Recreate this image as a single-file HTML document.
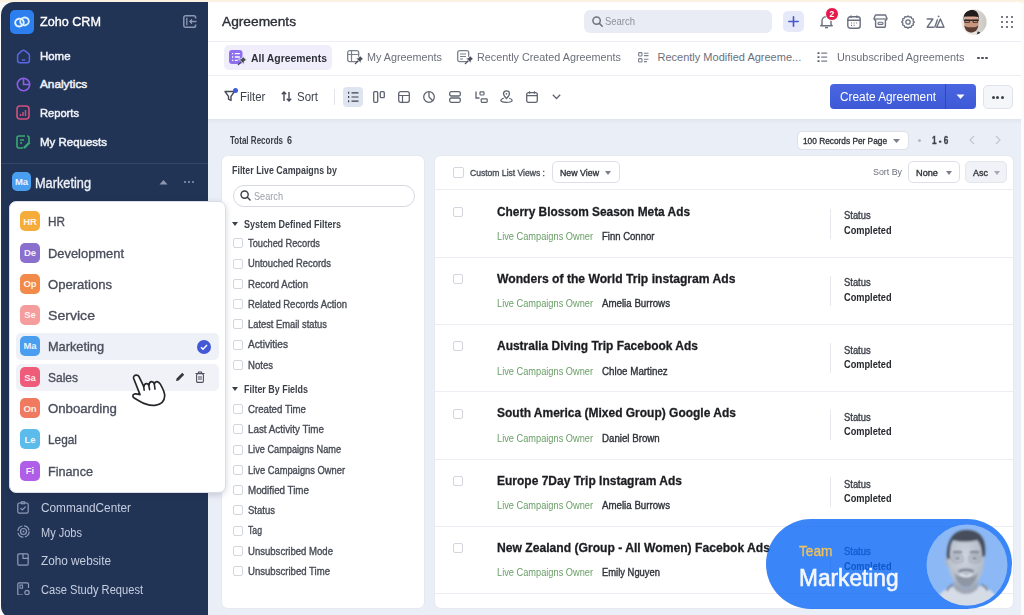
<!DOCTYPE html>
<html><head><meta charset="utf-8"><style>
html,body{margin:0;padding:0;width:1024px;height:615px;overflow:hidden;background:#fdf7ee}
body{position:relative;font-family:"Liberation Sans", sans-serif}
.t{position:absolute;line-height:1;white-space:nowrap;transform-origin:0 0}
svg{display:block}
</style></head><body>
<div style="position:absolute;left:0px;top:0px;width:1024px;height:615px;background:#fdfcfa"></div>
<div style="position:absolute;left:0px;top:0px;width:1024px;height:3px;background:linear-gradient(#fbf0de,#fdf6ec)"></div>
<div style="position:absolute;left:1px;top:2px;width:1020px;height:617px;background:#ffffff;border-top-left-radius:13px;border-bottom-left-radius:13px;border-top-right-radius:4px"></div>
<div style="position:absolute;left:1px;top:2px;width:207px;height:617px;background:#223455;border-top-left-radius:13px;border-bottom-left-radius:13px"></div>
<div style="position:absolute;left:208px;top:119px;width:813px;height:498px;background:#eaeef7"></div>
<div style="position:absolute;left:208px;top:41px;width:813px;height:1px;background:#eceef3"></div>
<div style="position:absolute;left:208px;top:75px;width:813px;height:1px;background:#eceef3"></div>
<div style="position:absolute;left:208px;top:119px;width:813px;height:5px;background:linear-gradient(rgba(222,226,236,0.8),rgba(234,238,247,0))"></div>
<div style="position:absolute;left:10px;top:10px;width:24px;height:24px;background:#2d7ff0;border-radius:5px"></div>
<svg style="position:absolute;left:13px;top:15px;" width="18" height="14" viewBox="0 0 18 14" fill="none"><g transform="rotate(-12 9 7)"><ellipse cx="6.4" cy="7" rx="4.3" ry="3.9" stroke="#e8f3ff" stroke-width="1.9"/><ellipse cx="11.6" cy="7" rx="4.3" ry="3.9" stroke="#d8f0f5" stroke-width="1.9"/></g></svg>
<div id="t0" class="t" style="left:40.3px;top:16.2px;font-size:12.5px;font-weight:400;color:#ffffff;transform:scaleX(1.009);-webkit-text-stroke:0.35px #ffffff;">Zoho CRM</div>
<svg style="position:absolute;left:183px;top:15px;" width="14" height="13" viewBox="0 0 14 13" fill="none"><path d="M12.6 3.6V2.6A1.8 1.8 0 0 0 10.8 0.8H2.6A1.8 1.8 0 0 0 0.8 2.6v7.8a1.8 1.8 0 0 0 1.8 1.8h8.2a1.8 1.8 0 0 0 1.8-1.8V9.4" stroke="#8d98b3" stroke-width="1.5"/><path d="M3.8 2.8v7.4" stroke="#8d98b3" stroke-width="1.3"/><path d="M13.5 6.5H7.2" stroke="#8d98b3" stroke-width="1.4"/><path d="M8.6 4.3 6.4 6.5l2.2 2.2z" fill="#8d98b3" stroke="#8d98b3" stroke-width="1"/></svg>
<div id="t1" class="t" style="left:40.0px;top:50.6px;font-size:11.8px;font-weight:400;color:#f0f2f8;transform:scaleX(0.969);-webkit-text-stroke:0.5px #f0f2f8;">Home</div>
<div id="t2" class="t" style="left:40.0px;top:79.0px;font-size:11.8px;font-weight:400;color:#f0f2f8;-webkit-text-stroke:0.5px #f0f2f8;">Analytics</div>
<div id="t3" class="t" style="left:40.0px;top:108.0px;font-size:11.8px;font-weight:400;color:#f0f2f8;transform:scaleX(0.944);-webkit-text-stroke:0.5px #f0f2f8;">Reports</div>
<div id="t4" class="t" style="left:40.0px;top:136.5px;font-size:11.8px;font-weight:400;color:#f0f2f8;transform:scaleX(0.973);-webkit-text-stroke:0.5px #f0f2f8;">My Requests</div>
<svg style="position:absolute;left:15.5px;top:49px;" width="15" height="15" viewBox="0 0 15 15" fill="none"><path d="M1.6 6.6Q1.6 5.6 2.4 4.9L6.2 1.7Q7.5 0.7 8.8 1.7L12.6 4.9Q13.4 5.6 13.4 6.6V11.6Q13.4 13.8 11.2 13.8H3.8Q1.6 13.8 1.6 11.6Z" stroke="#5a66e3" stroke-width="1.5"/><path d="M6.3 11h2.4" stroke="#5a66e3" stroke-width="1.3" stroke-linecap="round"/></svg>
<svg style="position:absolute;left:16px;top:77px;" width="15" height="15" viewBox="0 0 15 15" fill="none"><circle cx="7.5" cy="7.5" r="6.2" stroke="#8d5fe8" stroke-width="1.6"/><path d="M7.5 1.5v6h6" stroke="#8d5fe8" stroke-width="1.6"/></svg>
<svg style="position:absolute;left:16px;top:105px;" width="14" height="15" viewBox="0 0 14 15" fill="none"><rect x="1" y="1" width="12" height="13" rx="3" stroke="#d1507f" stroke-width="1.6"/><path d="M4.5 11V9M7 11V7M9.5 11V5" stroke="#d1507f" stroke-width="1.4"/></svg>
<svg style="position:absolute;left:16px;top:135px;" width="15" height="14" viewBox="0 0 15 14" fill="none"><path d="M9 1H3a2 2 0 0 0-2 2v8a2 2 0 0 0 2 2h4M13 7V3a2 2 0 0 0-2-2" stroke="#3aa872" stroke-width="1.6"/><path d="M4 5h4M4 8h2" stroke="#3aa872" stroke-width="1.4"/><path d="M8.5 12.5l4.5-4.5" stroke="#3aa872" stroke-width="2.4" stroke-linecap="round"/></svg>
<div style="position:absolute;left:1px;top:163px;width:207px;height:1px;background:#34476b"></div>
<div style="position:absolute;left:12px;top:172px;width:19px;height:19px;background:#4a9ef0;border-radius:5px"></div>
<div id="t5" class="t" style="left:21.5px;top:177.3px;font-size:9.5px;font-weight:700;color:rgba(255,255,255,0.92);transform:translateX(-50%)">Ma</div>
<div id="t6" class="t" style="left:34.8px;top:175.7px;font-size:14.0px;font-weight:400;color:#eef1f7;transform:scaleX(0.911);-webkit-text-stroke:0.35px #eef1f7;">Marketing</div>
<svg style="position:absolute;left:159px;top:179px;" width="9" height="6" viewBox="0 0 9 6" fill="none"><path d="M0.5 5.5 4.5 1l4 4.5z" fill="#8d98b3"/></svg>
<div style="position:absolute;left:183.5px;top:181px;width:2.4px;height:2.4px;background:#8d98b3;border-radius:50%"></div>
<div style="position:absolute;left:187.8px;top:181px;width:2.4px;height:2.4px;background:#8d98b3;border-radius:50%"></div>
<div style="position:absolute;left:192.1px;top:181px;width:2.4px;height:2.4px;background:#8d98b3;border-radius:50%"></div>
<div id="t7" class="t" style="left:41.3px;top:501.5px;font-size:12.0px;font-weight:400;color:#c6cee0;transform:scaleX(0.985);">CommandCenter</div>
<div id="t8" class="t" style="left:41.3px;top:526.8px;font-size:12.0px;font-weight:400;color:#c6cee0;transform:scaleX(0.917);">My Jobs</div>
<div id="t9" class="t" style="left:41.3px;top:554.8px;font-size:12.0px;font-weight:400;color:#c6cee0;transform:scaleX(0.981);">Zoho website</div>
<div id="t10" class="t" style="left:41.3px;top:583.5px;font-size:12.0px;font-weight:400;color:#c6cee0;transform:scaleX(0.927);">Case Study Request</div>
<svg style="position:absolute;left:17px;top:501px;" width="12" height="13" viewBox="0 0 12 13" fill="none"><rect x="0.8" y="2" width="10.4" height="10.2" rx="1.6" stroke="#8f9bb8" stroke-width="1.2"/><path d="M4 0.8h4v2H4z" stroke="#8f9bb8" stroke-width="1"/><path d="M3.5 7.2l1.8 1.8 3.3-3.4" stroke="#8f9bb8" stroke-width="1.2"/></svg>
<svg style="position:absolute;left:17px;top:525px;" width="13" height="13" viewBox="0 0 13 13" fill="none"><circle cx="6.5" cy="6.5" r="5.6" stroke="#8f9bb8" stroke-width="1.2" stroke-dasharray="7 1.8"/><circle cx="6.5" cy="6.5" r="3" stroke="#8f9bb8" stroke-width="1.2"/><circle cx="6.5" cy="6.5" r="0.9" fill="#8f9bb8"/></svg>
<svg style="position:absolute;left:17px;top:553px;" width="12" height="13" viewBox="0 0 12 13" fill="none"><rect x="0.8" y="0.8" width="10.4" height="11.4" rx="1.2" stroke="#8f9bb8" stroke-width="1.2"/><path d="M6 0.8v4.5h5.2" stroke="#8f9bb8" stroke-width="1.2"/></svg>
<svg style="position:absolute;left:17px;top:582px;" width="13" height="13" viewBox="0 0 13 13" fill="none"><path d="M11.5 6V2.2A1.4 1.4 0 0 0 10.1 0.8H2.2A1.4 1.4 0 0 0 0.8 2.2v9.6a1.4 1.4 0 0 0 1.4 1.4H6" stroke="#8f9bb8" stroke-width="1.2"/><rect x="3" y="3" width="2.6" height="3.2" stroke="#8f9bb8" stroke-width="1"/><circle cx="10" cy="10.5" r="2.2" stroke="#8f9bb8" stroke-width="1.2"/></svg>
<div id="t11" class="t" style="left:221.5px;top:15.0px;font-size:13.0px;font-weight:400;color:#2d3038;transform:scaleX(1.056);-webkit-text-stroke:0.35px #2d3038;">Agreements</div>
<div style="position:absolute;left:584px;top:10px;width:188px;height:23px;background:#e9ecf4;border-radius:6px"></div>
<svg style="position:absolute;left:592px;top:16px;" width="11" height="11" viewBox="0 0 11 11" fill="none"><circle cx="4.6" cy="4.6" r="3.7" stroke="#6f7480" stroke-width="1.5"/><path d="M7.4 7.4l2.8 2.8" stroke="#6f7480" stroke-width="1.5" stroke-linecap="round"/></svg>
<div id="t12" class="t" style="left:605.0px;top:16.1px;font-size:11.0px;font-weight:400;color:#8b909c;transform:scaleX(0.861);">Search</div>
<div style="position:absolute;left:783px;top:11px;width:21px;height:21px;background:#e6e9f9;border-radius:5px"></div>
<svg style="position:absolute;left:788px;top:16px;" width="11" height="11" viewBox="0 0 11 11" fill="none"><path d="M5.5 0.8v9.4M0.8 5.5h9.4" stroke="#4658cf" stroke-width="1.6" stroke-linecap="round"/></svg>
<svg style="position:absolute;left:819px;top:14px;" width="15" height="15" viewBox="0 0 15 15" fill="none"><path d="M3 10.5V7a4.5 4.5 0 0 1 9 0v3.5l1.2 1.3H1.8z" stroke="#6b7080" stroke-width="1.4" stroke-linejoin="round"/><path d="M6 13.6h3" stroke="#6b7080" stroke-width="1.4"/></svg>
<div style="position:absolute;left:825px;top:7px;width:14px;height:14px;background:#e5194a;border-radius:50%;border:1.5px solid #fff;box-sizing:border-box"></div>
<div id="t13" class="t" style="left:829.4px;top:10.4px;font-size:8.5px;font-weight:700;color:#ffffff;">2</div>
<svg style="position:absolute;left:847px;top:15px;" width="14" height="14" viewBox="0 0 14 14" fill="none"><rect x="0.8" y="1.8" width="12.4" height="11.4" rx="2.5" stroke="#6b7080" stroke-width="1.4"/><path d="M0.8 5.2h12.4M4 0.5v2.5M10 0.5v2.5" stroke="#6b7080" stroke-width="1.4"/><path d="M4 8h1M6.6 8h1M9.2 8h1M4 10.4h1M6.6 10.4h1" stroke="#6b7080" stroke-width="1.1"/></svg>
<svg style="position:absolute;left:873px;top:14px;" width="15" height="14" viewBox="0 0 15 14" fill="none"><path d="M2.5 1h10l1.5 3.6c0 1-0.8 1.6-1.6 1.6V12.2a1 1 0 0 1-1 1H3.6a1 1 0 0 1-1-1V6.2C1.8 6.2 1 5.6 1 4.6z" stroke="#6b7080" stroke-width="1.4" stroke-linejoin="round"/><path d="M1 5h13" stroke="#6b7080" stroke-width="1.2"/><rect x="5" y="8.2" width="5" height="2.2" rx="1" stroke="#6b7080" stroke-width="1.1"/></svg>
<svg style="position:absolute;left:901px;top:15px;" width="14" height="14" viewBox="0 0 14 14" fill="none"><path d="M7 0.9l1.3 1.2 1.8-0.3 0.6 1.7 1.7 0.7-0.3 1.8L13.3 7l-1.2 1.3 0.3 1.8-1.7 0.6-0.7 1.7-1.8-0.3L7 13.3l-1.3-1.2-1.8 0.3-0.6-1.7-1.7-0.7 0.3-1.8L0.7 7l1.2-1.3-0.3-1.8 1.7-0.6 0.7-1.7 1.8 0.3z" stroke="#6b7080" stroke-width="1.3" stroke-linejoin="round"/><circle cx="7" cy="7" r="2.2" stroke="#6b7080" stroke-width="1.3"/></svg>
<svg style="position:absolute;left:926px;top:14px;" width="19" height="15" viewBox="0 0 19 15" fill="none"><path d="M1.2 5h5.6L1.2 13.2h6.2M8.8 13.2l2.6-7.4M10.6 13.2 14.4 5l3.6 8.2z" stroke="#6b7080" stroke-width="1.4" stroke-linejoin="round" stroke-linecap="round"/><circle cx="12.6" cy="2.4" r="0.9" fill="#6b7080"/></svg>
<svg style="position:absolute;left:961px;top:9px;" width="26" height="26" viewBox="0 0 26 26" fill="none"><defs><clipPath id="av"><circle cx="13" cy="13" r="12.6"/></clipPath><filter id="avb"><feGaussianBlur stdDeviation="0.55"/></filter><linearGradient id="avg" x1="0" x2="1"><stop offset="0" stop-color="#eeece9"/><stop offset="1" stop-color="#cbc6c1"/></linearGradient></defs><g clip-path="url(#av)"><rect width="26" height="26" fill="url(#avg)"/><g filter="url(#avb)"><path d="M2 27c0.5-3 3-4.5 8.3-4.8 5.3 0.3 7.8 1.8 8.3 4.8z" fill="#ebe6e0"/><path d="M0 27c0.5-3 1.5-4 3.8-4.5l1.6 4.5zM20.6 27c-0.5-3-1.5-4-3.8-4.5l-1.6 4.5z" fill="#2f3338"/><ellipse cx="10.3" cy="13.8" rx="7.3" ry="9" fill="#c8957f"/><ellipse cx="10.3" cy="8.6" rx="5.6" ry="2.4" fill="#dba793"/><path d="M2.7 11.6c-0.6-6.6 2.4-10.8 7.6-10.8 5.2 0 8.2 4 7.6 10.6l-0.8-3.4c-3-0.6-8-0.8-13.6-0.3z" fill="#241e1d"/><path d="M3.2 16.5c1 5 3.6 7 7.1 7s6.1-2 7.1-7c-1.5 1.3-3.5 1.8-7.1 1.8s-5.6-0.5-7.1-1.8z" fill="#5c3e33"/><path d="M2.8 11.2h15" stroke="#2a2524" stroke-width="1.4"/><path d="M3.8 11.4h4.6v2H3.8zM12 11.4h4.6v2H12z" fill="none" stroke="#2a2524" stroke-width="0.8"/></g></g></svg>
<div style="position:absolute;left:1000.5px;top:15.5px;width:2.6px;height:2.6px;background:#5c606b;border-radius:0.8px"></div>
<div style="position:absolute;left:1005.7px;top:15.5px;width:2.6px;height:2.6px;background:#5c606b;border-radius:0.8px"></div>
<div style="position:absolute;left:1010.9px;top:15.5px;width:2.6px;height:2.6px;background:#5c606b;border-radius:0.8px"></div>
<div style="position:absolute;left:1000.5px;top:20.7px;width:2.6px;height:2.6px;background:#5c606b;border-radius:0.8px"></div>
<div style="position:absolute;left:1005.7px;top:20.7px;width:2.6px;height:2.6px;background:#5c606b;border-radius:0.8px"></div>
<div style="position:absolute;left:1010.9px;top:20.7px;width:2.6px;height:2.6px;background:#5c606b;border-radius:0.8px"></div>
<div style="position:absolute;left:1000.5px;top:25.9px;width:2.6px;height:2.6px;background:#5c606b;border-radius:0.8px"></div>
<div style="position:absolute;left:1005.7px;top:25.9px;width:2.6px;height:2.6px;background:#5c606b;border-radius:0.8px"></div>
<div style="position:absolute;left:1010.9px;top:25.9px;width:2.6px;height:2.6px;background:#5c606b;border-radius:0.8px"></div>
<div style="position:absolute;left:224px;top:45px;width:108px;height:25px;background:#f1eefc;border-radius:5px"></div>
<svg style="position:absolute;left:229px;top:50px;" width="18" height="17" viewBox="0 0 18 17" fill="none"><rect x="0" y="0" width="13.5" height="14" rx="3" fill="#8e6ff0"/><path d="M3 3.6h1.2M3 7h1.2M3 10.4h1.2M5.8 3.6h5M5.8 7h5M5.8 10.4h3" stroke="#fff" stroke-width="1.3"/><g transform="translate(12.5,11.5) rotate(45)"><path d="M-2.6 -4.6h5.2l-0.7 2.8 2 2.1h-7.8l2-2.1z" fill="#454a58" stroke="#f1eefc" stroke-width="0.8" stroke-linejoin="round"/><path d="M0 0.5v4.5" stroke="#454a58" stroke-width="1.2"/></g></svg>
<div id="t14" class="t" style="left:251.2px;top:52.5px;font-size:11.0px;font-weight:700;color:#2d3038;transform:scaleX(0.946);">All Agreements</div>
<svg style="position:absolute;left:347px;top:50px;" width="16" height="16" viewBox="0 0 16 16" fill="none"><rect x="0.7" y="0.7" width="11" height="11" rx="2" stroke="#7a7f8c" stroke-width="1.3"/><path d="M0.7 4.5h11M4.5 0.7v11" stroke="#7a7f8c" stroke-width="1.2"/><g transform="translate(11.5,10.5) rotate(45)"><path d="M-2.6 -4.6h5.2l-0.7 2.8 2 2.1h-7.8l2-2.1z" fill="#4a4f5c" stroke="#fff" stroke-width="0.9" stroke-linejoin="round"/><path d="M0 0.5v4.5" stroke="#4a4f5c" stroke-width="1.2"/></g></svg>
<div id="t15" class="t" style="left:366.9px;top:52.1px;font-size:11.0px;font-weight:400;color:#6b6f7a;transform:scaleX(0.981);">My Agreements</div>
<svg style="position:absolute;left:457px;top:50px;" width="16" height="16" viewBox="0 0 16 16" fill="none"><rect x="0.7" y="0.7" width="11" height="11" rx="2" stroke="#7a7f8c" stroke-width="1.3"/><path d="M3 4h6M3 6.5h6M3 9h3" stroke="#7a7f8c" stroke-width="1.2"/><g transform="translate(11.5,10.5) rotate(45)"><path d="M-2.6 -4.6h5.2l-0.7 2.8 2 2.1h-7.8l2-2.1z" fill="#4a4f5c" stroke="#fff" stroke-width="0.9" stroke-linejoin="round"/><path d="M0 0.5v4.5" stroke="#4a4f5c" stroke-width="1.2"/></g></svg>
<div id="t16" class="t" style="left:477.0px;top:52.1px;font-size:11.0px;font-weight:400;color:#6b6f7a;transform:scaleX(0.981);">Recently Created Agreements</div>
<svg style="position:absolute;left:638px;top:52px;" width="11" height="11" viewBox="0 0 11 11" fill="none"><rect x="0.6" y="0.6" width="3.4" height="3.4" rx="0.8" stroke="#7a7f8c" stroke-width="1.1"/><rect x="0.6" y="6.6" width="3.4" height="3.4" rx="0.8" stroke="#7a7f8c" stroke-width="1.1"/><path d="M6 1.2h4.5M6 3.6h4.5M6 7.2h4.5M6 9.6h3" stroke="#7a7f8c" stroke-width="1.1"/></svg>
<div id="t17" class="t" style="left:657.5px;top:52.1px;font-size:11.0px;font-weight:400;color:#6b6f7a;">Recently Modified Agreeme...</div>
<svg style="position:absolute;left:817px;top:52px;" width="11" height="11" viewBox="0 0 11 11" fill="none"><path d="M0.5 1.2h2M0.5 5.2h2M0.5 9.2h2" stroke="#5c606b" stroke-width="1.8"/><path d="M4.2 1.2h6M4.2 5.2h6M4.2 9.2h6" stroke="#7a7f8c" stroke-width="1.2"/></svg>
<div id="t18" class="t" style="left:837.2px;top:52.1px;font-size:11.0px;font-weight:400;color:#6b6f7a;transform:scaleX(0.988);">Unsubscribed Agreements</div>
<div style="position:absolute;left:977px;top:56.5px;width:2.6px;height:2.6px;background:#4a4e58;border-radius:50%"></div>
<div style="position:absolute;left:981px;top:56.5px;width:2.6px;height:2.6px;background:#4a4e58;border-radius:50%"></div>
<div style="position:absolute;left:985px;top:56.5px;width:2.6px;height:2.6px;background:#4a4e58;border-radius:50%"></div>
<svg style="position:absolute;left:224px;top:90px;" width="14" height="12" viewBox="0 0 14 12" fill="none"><path d="M1 1.5h9.5L7 6.3v4.2L4.5 9.2V6.3z" stroke="#454955" stroke-width="1.4" stroke-linejoin="round"/></svg>
<div style="position:absolute;left:233px;top:88px;width:5px;height:5px;background:#3d5bdb;border-radius:50%"></div>
<div id="t19" class="t" style="left:240.2px;top:90.8px;font-size:12.0px;font-weight:400;color:#3e424c;transform:scaleX(0.952);">Filter</div>
<svg style="position:absolute;left:281px;top:91px;" width="11" height="11" viewBox="0 0 11 11" fill="none"><path d="M3 10V1M0.8 3.2 3 1l2.2 2.2" stroke="#454955" stroke-width="1.4"/><path d="M8 1v9M5.8 7.8 8 10l2.2-2.2" stroke="#454955" stroke-width="1.4"/></svg>
<div id="t20" class="t" style="left:296.9px;top:90.8px;font-size:12.0px;font-weight:400;color:#3e424c;transform:scaleX(0.954);">Sort</div>
<div style="position:absolute;left:334px;top:89px;width:1px;height:16px;background:#e3e5eb"></div>
<div style="position:absolute;left:343px;top:87px;width:20px;height:20px;background:#dfe4f1;border-radius:4px"></div>
<svg style="position:absolute;left:347px;top:91px;" width="12" height="12" viewBox="0 0 12 12" fill="none"><path d="M1 1.8h1.2M1 6h1.2M1 10.2h1.2" stroke="#3c404a" stroke-width="2"/><path d="M4.5 1.8h7M4.5 6h7M4.5 10.2h7" stroke="#3c404a" stroke-width="1.2"/></svg>
<svg style="position:absolute;left:372.5px;top:90.5px;" width="12" height="12" viewBox="0 0 12 12" fill="none"><rect x="0.7" y="0.7" width="4" height="10.6" rx="1" stroke="#5f6470" stroke-width="1.3"/><rect x="7.3" y="0.7" width="4" height="6" rx="1" stroke="#5f6470" stroke-width="1.3"/></svg>
<svg style="position:absolute;left:397.5px;top:90.5px;" width="12" height="12" viewBox="0 0 12 12" fill="none"><rect x="0.7" y="0.7" width="10.6" height="10.6" rx="2" stroke="#5f6470" stroke-width="1.3"/><path d="M0.7 4.5h10.6M4.5 4.5v6.8" stroke="#5f6470" stroke-width="1.2"/></svg>
<svg style="position:absolute;left:423px;top:90.5px;" width="12" height="12" viewBox="0 0 12 12" fill="none"><circle cx="6" cy="6" r="5.3" stroke="#5f6470" stroke-width="1.3"/><path d="M6 0.7V6l3.8 3.8" stroke="#5f6470" stroke-width="1.3"/></svg>
<svg style="position:absolute;left:448.5px;top:90.5px;" width="12" height="12" viewBox="0 0 12 12" fill="none"><rect x="0.7" y="0.7" width="10.6" height="4.3" rx="1.5" stroke="#5f6470" stroke-width="1.3"/><rect x="0.7" y="7" width="10.6" height="4.3" rx="1.5" stroke="#5f6470" stroke-width="1.3"/></svg>
<svg style="position:absolute;left:474.5px;top:90.5px;" width="13" height="12" viewBox="0 0 13 12" fill="none"><path d="M1 0.5v6.5h3.5" stroke="#5f6470" stroke-width="1.3"/><rect x="5" y="0.8" width="4" height="3.2" rx="0.8" stroke="#5f6470" stroke-width="1.2"/><rect x="6.2" y="7.8" width="6" height="3.5" rx="0.8" stroke="#5f6470" stroke-width="1.2"/></svg>
<svg style="position:absolute;left:500px;top:90px;" width="13" height="13" viewBox="0 0 13 13" fill="none"><path d="M6.5 8.5C4.5 6.5 3.5 5 3.5 3.8a3 3 0 0 1 6 0C9.5 5 8.5 6.5 6.5 8.5z" stroke="#5f6470" stroke-width="1.3"/><circle cx="6.5" cy="3.8" r="0.9" fill="#5f6470"/><path d="M3.8 8.2C1.8 8.8 0.8 9.5 0.8 10.3c0 1.3 2.6 2 5.7 2s5.7-0.7 5.7-2c0-0.8-1-1.5-3-2.1" stroke="#5f6470" stroke-width="1.2"/></svg>
<svg style="position:absolute;left:525.5px;top:90.5px;" width="12" height="12" viewBox="0 0 12 12" fill="none"><rect x="0.7" y="1.6" width="10.6" height="9.8" rx="2" stroke="#5f6470" stroke-width="1.3"/><path d="M0.7 4.6h10.6M3.5 0.2v2.5M8.5 0.2v2.5" stroke="#5f6470" stroke-width="1.2"/></svg>
<svg style="position:absolute;left:552px;top:94px;" width="9" height="6" viewBox="0 0 9 6" fill="none"><path d="M0.8 0.8 4.5 4.5 8.2 0.8" stroke="#5f6470" stroke-width="1.3"/></svg>
<div style="position:absolute;left:830px;top:84px;width:146px;height:25px;background:linear-gradient(#4a67e0,#3d59d6);border-radius:4px"></div>
<div style="position:absolute;left:945px;top:84px;width:1px;height:25px;background:#3149b8"></div>
<div id="t21" class="t" style="left:840.0px;top:91.3px;font-size:12.0px;font-weight:400;color:#ffffff;transform:scaleX(0.986);">Create Agreement</div>
<svg style="position:absolute;left:956px;top:94px;" width="9" height="6" viewBox="0 0 9 6" fill="none"><path d="M0.5 0.5h8L4.5 5z" fill="#ffffff"/></svg>
<div style="position:absolute;left:983px;top:85px;width:30px;height:24px;background:#f5f6fa;border:1px solid #dfe2ea;border-radius:5px;box-sizing:border-box"></div>
<div style="position:absolute;left:991.5px;top:95.5px;width:3px;height:3px;background:#3c404a;border-radius:50%"></div>
<div style="position:absolute;left:996.1px;top:95.5px;width:3px;height:3px;background:#3c404a;border-radius:50%"></div>
<div style="position:absolute;left:1000.7px;top:95.5px;width:3px;height:3px;background:#3c404a;border-radius:50%"></div>
<div id="t22" class="t" style="left:229.9px;top:136.0px;font-size:10.0px;font-weight:700;color:#3b3f48;transform:scaleX(0.804);">Total Records</div>
<div id="t23" class="t" style="left:287.0px;top:136.0px;font-size:10.0px;font-weight:700;color:#3b3f48;transform:scaleX(0.899);">6</div>
<div style="position:absolute;left:797px;top:131px;width:112px;height:19px;background:#ffffff;border:1px solid #dde0e8;border-radius:5px;box-sizing:border-box"></div>
<div id="t24" class="t" style="left:803.0px;top:135.9px;font-size:9.5px;font-weight:400;color:#2f3239;transform:scaleX(0.874);-webkit-text-stroke:0.35px #2f3239;">100 Records Per Page</div>
<svg style="position:absolute;left:893px;top:139px;" width="7" height="4" viewBox="0 0 7 4" fill="none"><path d="M0 0h7L3.5 4z" fill="#7a7f8a"/></svg>
<div style="position:absolute;left:918px;top:139px;width:3px;height:3px;background:#b4b8c2;border-radius:50%"></div>
<div id="t25" class="t" style="left:932.4px;top:135.5px;font-size:10.0px;font-weight:700;color:#3b3f48;transform:scaleX(0.819);-webkit-text-stroke:0.3px #3b3f48;">1 - 6</div>
<svg style="position:absolute;left:969px;top:135px;" width="6" height="10" viewBox="0 0 6 10" fill="none"><path d="M5 1 1 5l4 4" stroke="#c2c6cf" stroke-width="1.2"/></svg>
<svg style="position:absolute;left:995px;top:135px;" width="6" height="10" viewBox="0 0 6 10" fill="none"><path d="M1 1l4 4-4 4" stroke="#c2c6cf" stroke-width="1.2"/></svg>
<div style="position:absolute;left:221px;top:155px;width:204px;height:454px;background:#ffffff;border-radius:7px;border:1px solid #e6e9f0;box-sizing:border-box"></div>
<div id="t26" class="t" style="left:232.1px;top:164.7px;font-size:11.0px;font-weight:700;color:#3b3f48;transform:scaleX(0.806);">Filter Live Campaigns by</div>
<div style="position:absolute;left:233px;top:185px;width:182px;height:22px;background:#fff;border:1px solid #d6d9e0;border-radius:11px;box-sizing:border-box"></div>
<svg style="position:absolute;left:240px;top:190px;" width="11" height="11" viewBox="0 0 11 11" fill="none"><circle cx="4.6" cy="4.6" r="3.6" stroke="#3b3f48" stroke-width="1.4"/><path d="M7.3 7.3l2.8 2.8" stroke="#3b3f48" stroke-width="1.4" stroke-linecap="round"/></svg>
<div id="t27" class="t" style="left:253.7px;top:190.7px;font-size:10.5px;font-weight:400;color:#9a9ea8;transform:scaleX(0.871);">Search</div>
<svg style="position:absolute;left:232px;top:221.5px;" width="6" height="4" viewBox="0 0 6 4" fill="none"><path d="M0 0h6L3 4z" fill="#3b3f48"/></svg>
<div id="t28" class="t" style="left:244.3px;top:218.6px;font-size:10.5px;font-weight:700;color:#3b3f48;transform:scaleX(0.857);">System Defined Filters</div>
<div style="position:absolute;left:233px;top:238.3px;width:10px;height:10px;border:1px solid #d3d6dd;border-radius:2px;box-sizing:border-box;background:#fff"></div>
<div id="t29" class="t" style="left:248.3px;top:238.0px;font-size:10.5px;font-weight:400;color:#474b54;transform:scaleX(0.881);-webkit-text-stroke:0.35px #474b54;">Touched Records</div>
<div style="position:absolute;left:233px;top:258.58px;width:10px;height:10px;border:1px solid #d3d6dd;border-radius:2px;box-sizing:border-box;background:#fff"></div>
<div id="t30" class="t" style="left:248.3px;top:258.3px;font-size:10.5px;font-weight:400;color:#474b54;transform:scaleX(0.894);-webkit-text-stroke:0.35px #474b54;">Untouched Records</div>
<div style="position:absolute;left:233px;top:278.86px;width:10px;height:10px;border:1px solid #d3d6dd;border-radius:2px;box-sizing:border-box;background:#fff"></div>
<div id="t31" class="t" style="left:248.3px;top:278.5px;font-size:10.5px;font-weight:400;color:#474b54;transform:scaleX(0.918);-webkit-text-stroke:0.35px #474b54;">Record Action</div>
<div style="position:absolute;left:233px;top:299.14px;width:10px;height:10px;border:1px solid #d3d6dd;border-radius:2px;box-sizing:border-box;background:#fff"></div>
<div id="t32" class="t" style="left:248.3px;top:298.8px;font-size:10.5px;font-weight:400;color:#474b54;transform:scaleX(0.902);-webkit-text-stroke:0.35px #474b54;">Related Records Action</div>
<div style="position:absolute;left:233px;top:319.41999999999996px;width:10px;height:10px;border:1px solid #d3d6dd;border-radius:2px;box-sizing:border-box;background:#fff"></div>
<div id="t33" class="t" style="left:248.3px;top:319.1px;font-size:10.5px;font-weight:400;color:#474b54;transform:scaleX(0.890);-webkit-text-stroke:0.35px #474b54;">Latest Email status</div>
<div style="position:absolute;left:233px;top:339.7px;width:10px;height:10px;border:1px solid #d3d6dd;border-radius:2px;box-sizing:border-box;background:#fff"></div>
<div id="t34" class="t" style="left:248.3px;top:339.4px;font-size:10.5px;font-weight:400;color:#474b54;transform:scaleX(0.965);-webkit-text-stroke:0.35px #474b54;">Activities</div>
<div style="position:absolute;left:233px;top:359.98px;width:10px;height:10px;border:1px solid #d3d6dd;border-radius:2px;box-sizing:border-box;background:#fff"></div>
<div id="t35" class="t" style="left:248.3px;top:359.7px;font-size:10.5px;font-weight:400;color:#474b54;transform:scaleX(0.911);-webkit-text-stroke:0.35px #474b54;">Notes</div>
<svg style="position:absolute;left:232px;top:386.5px;" width="6" height="4" viewBox="0 0 6 4" fill="none"><path d="M0 0h6L3 4z" fill="#3b3f48"/></svg>
<div id="t36" class="t" style="left:244.3px;top:383.9px;font-size:10.5px;font-weight:700;color:#3b3f48;transform:scaleX(0.850);">Filter By Fields</div>
<div style="position:absolute;left:233px;top:404.0px;width:10px;height:10px;border:1px solid #d3d6dd;border-radius:2px;box-sizing:border-box;background:#fff"></div>
<div id="t37" class="t" style="left:248.3px;top:403.7px;font-size:10.5px;font-weight:400;color:#474b54;transform:scaleX(0.920);-webkit-text-stroke:0.35px #474b54;">Created Time</div>
<div style="position:absolute;left:233px;top:424.28px;width:10px;height:10px;border:1px solid #d3d6dd;border-radius:2px;box-sizing:border-box;background:#fff"></div>
<div id="t38" class="t" style="left:248.3px;top:424.0px;font-size:10.5px;font-weight:400;color:#474b54;transform:scaleX(0.937);-webkit-text-stroke:0.35px #474b54;">Last Activity Time</div>
<div style="position:absolute;left:233px;top:444.56px;width:10px;height:10px;border:1px solid #d3d6dd;border-radius:2px;box-sizing:border-box;background:#fff"></div>
<div id="t39" class="t" style="left:248.3px;top:444.2px;font-size:10.5px;font-weight:400;color:#474b54;transform:scaleX(0.876);-webkit-text-stroke:0.35px #474b54;">Live Campaigns Name</div>
<div style="position:absolute;left:233px;top:464.84000000000003px;width:10px;height:10px;border:1px solid #d3d6dd;border-radius:2px;box-sizing:border-box;background:#fff"></div>
<div id="t40" class="t" style="left:248.3px;top:464.5px;font-size:10.5px;font-weight:400;color:#474b54;transform:scaleX(0.889);-webkit-text-stroke:0.35px #474b54;">Live Campaigns Owner</div>
<div style="position:absolute;left:233px;top:485.12px;width:10px;height:10px;border:1px solid #d3d6dd;border-radius:2px;box-sizing:border-box;background:#fff"></div>
<div id="t41" class="t" style="left:248.3px;top:484.8px;font-size:10.5px;font-weight:400;color:#474b54;transform:scaleX(0.933);-webkit-text-stroke:0.35px #474b54;">Modified Time</div>
<div style="position:absolute;left:233px;top:505.4px;width:10px;height:10px;border:1px solid #d3d6dd;border-radius:2px;box-sizing:border-box;background:#fff"></div>
<div id="t42" class="t" style="left:248.3px;top:505.1px;font-size:10.5px;font-weight:400;color:#474b54;transform:scaleX(0.907);-webkit-text-stroke:0.35px #474b54;">Status</div>
<div style="position:absolute;left:233px;top:525.68px;width:10px;height:10px;border:1px solid #d3d6dd;border-radius:2px;box-sizing:border-box;background:#fff"></div>
<div id="t43" class="t" style="left:248.3px;top:525.4px;font-size:10.5px;font-weight:400;color:#474b54;transform:scaleX(0.827);-webkit-text-stroke:0.35px #474b54;">Tag</div>
<div style="position:absolute;left:233px;top:545.96px;width:10px;height:10px;border:1px solid #d3d6dd;border-radius:2px;box-sizing:border-box;background:#fff"></div>
<div id="t44" class="t" style="left:248.3px;top:545.6px;font-size:10.5px;font-weight:400;color:#474b54;transform:scaleX(0.910);-webkit-text-stroke:0.35px #474b54;">Unsubscribed Mode</div>
<div style="position:absolute;left:233px;top:566.24px;width:10px;height:10px;border:1px solid #d3d6dd;border-radius:2px;box-sizing:border-box;background:#fff"></div>
<div id="t45" class="t" style="left:248.3px;top:565.9px;font-size:10.5px;font-weight:400;color:#474b54;transform:scaleX(0.912);-webkit-text-stroke:0.35px #474b54;">Unsubscribed Time</div>
<div style="position:absolute;left:434px;top:155px;width:580px;height:454px;background:#ffffff;border-radius:7px;border:1px solid #e6e9f0;box-sizing:border-box;overflow:hidden"></div>
<div style="position:absolute;left:434px;top:189px;width:580px;height:1px;background:#eceef3"></div>
<div style="position:absolute;left:453px;top:167px;width:11px;height:11px;border:1px solid #d3d6dd;border-radius:2px;box-sizing:border-box;background:#fff"></div>
<div id="t46" class="t" style="left:469.5px;top:167.6px;font-size:9.5px;font-weight:400;color:#474b54;transform:scaleX(0.901);-webkit-text-stroke:0.35px #474b54;">Custom List Views :</div>
<div style="position:absolute;left:552px;top:161px;width:68px;height:22px;background:#fff;border:1px solid #dde0e8;border-radius:5px;box-sizing:border-box"></div>
<div id="t47" class="t" style="left:560.0px;top:167.6px;font-size:9.5px;font-weight:400;color:#2f3239;transform:scaleX(0.927);-webkit-text-stroke:0.35px #2f3239;">New View</div>
<svg style="position:absolute;left:605px;top:171px;" width="6" height="4" viewBox="0 0 6 4" fill="none"><path d="M0 0h6L3 4z" fill="#7a7f8a"/></svg>
<div id="t48" class="t" style="left:873.0px;top:167.3px;font-size:9.5px;font-weight:400;color:#6b6f7a;transform:scaleX(0.931);">Sort By</div>
<div style="position:absolute;left:908px;top:161px;width:52px;height:22px;background:#fff;border:1px solid #dde0e8;border-radius:5px;box-sizing:border-box"></div>
<div id="t49" class="t" style="left:916.0px;top:167.5px;font-size:9.5px;font-weight:400;color:#2f3239;transform:scaleX(0.968);-webkit-text-stroke:0.35px #2f3239;">None</div>
<svg style="position:absolute;left:946px;top:171px;" width="6" height="4" viewBox="0 0 6 4" fill="none"><path d="M0 0h6L3 4z" fill="#7a7f8a"/></svg>
<div style="position:absolute;left:965px;top:161px;width:42px;height:22px;background:#f0f2f7;border:1px solid #e3e6ec;border-radius:5px;box-sizing:border-box"></div>
<div id="t50" class="t" style="left:973.0px;top:167.5px;font-size:9.5px;font-weight:400;color:#2f3239;transform:scaleX(0.947);-webkit-text-stroke:0.35px #2f3239;">Asc</div>
<svg style="position:absolute;left:994px;top:171px;" width="6" height="4" viewBox="0 0 6 4" fill="none"><path d="M0 0h6L3 4z" fill="#a4a8b2"/></svg>
<div style="position:absolute;left:453px;top:207.0px;width:10px;height:10px;border:1px solid #d3d6dd;border-radius:2px;box-sizing:border-box;background:#fff"></div>
<div id="t51" class="t" style="left:496.8px;top:204.8px;font-size:13.5px;font-weight:700;color:#1c1d21;transform:scaleX(0.880);-webkit-text-stroke:0.3px #1c1d21;">Cherry Blossom Season Meta Ads</div>
<div id="t52" class="t" style="left:497.0px;top:232.2px;font-size:10.0px;font-weight:400;color:#689f66;transform:scaleX(0.924);">Live Campaigns Owner</div>
<div id="t53" class="t" style="left:602.3px;top:232.2px;font-size:10.0px;font-weight:400;color:#2f3239;transform:scaleX(0.952);-webkit-text-stroke:0.35px #2f3239;">Finn Connor</div>
<div style="position:absolute;left:830px;top:208.5px;width:1px;height:30px;background:#e6e8ee"></div>
<div id="t54" class="t" style="left:844.0px;top:211.1px;font-size:10.0px;font-weight:400;color:#3b3f48;transform:scaleX(0.941);-webkit-text-stroke:0.35px #3b3f48;">Status</div>
<div id="t55" class="t" style="left:844.0px;top:225.5px;font-size:10.0px;font-weight:700;color:#26282d;transform:scaleX(0.921);">Completed</div>
<div style="position:absolute;left:434px;top:257.0px;width:580px;height:1px;background:#eceef3"></div>
<div style="position:absolute;left:453px;top:274.2px;width:10px;height:10px;border:1px solid #d3d6dd;border-radius:2px;box-sizing:border-box;background:#fff"></div>
<div id="t56" class="t" style="left:496.8px;top:272.0px;font-size:13.5px;font-weight:700;color:#1c1d21;transform:scaleX(0.899);-webkit-text-stroke:0.3px #1c1d21;">Wonders of the World Trip instagram Ads</div>
<div id="t57" class="t" style="left:497.0px;top:299.4px;font-size:10.0px;font-weight:400;color:#689f66;transform:scaleX(0.924);">Live Campaigns Owner</div>
<div id="t58" class="t" style="left:602.3px;top:299.4px;font-size:10.0px;font-weight:400;color:#2f3239;transform:scaleX(0.971);-webkit-text-stroke:0.35px #2f3239;">Amelia Burrows</div>
<div style="position:absolute;left:830px;top:275.7px;width:1px;height:30px;background:#e6e8ee"></div>
<div id="t59" class="t" style="left:844.0px;top:278.3px;font-size:10.0px;font-weight:400;color:#3b3f48;transform:scaleX(0.941);-webkit-text-stroke:0.35px #3b3f48;">Status</div>
<div id="t60" class="t" style="left:844.0px;top:292.7px;font-size:10.0px;font-weight:700;color:#26282d;transform:scaleX(0.921);">Completed</div>
<div style="position:absolute;left:434px;top:324.2px;width:580px;height:1px;background:#eceef3"></div>
<div style="position:absolute;left:453px;top:341.4px;width:10px;height:10px;border:1px solid #d3d6dd;border-radius:2px;box-sizing:border-box;background:#fff"></div>
<div id="t61" class="t" style="left:496.8px;top:339.2px;font-size:13.5px;font-weight:700;color:#1c1d21;transform:scaleX(0.886);-webkit-text-stroke:0.3px #1c1d21;">Australia Diving Trip Facebook Ads</div>
<div id="t62" class="t" style="left:497.0px;top:366.6px;font-size:10.0px;font-weight:400;color:#689f66;transform:scaleX(0.924);">Live Campaigns Owner</div>
<div id="t63" class="t" style="left:602.3px;top:366.6px;font-size:10.0px;font-weight:400;color:#2f3239;transform:scaleX(0.977);-webkit-text-stroke:0.35px #2f3239;">Chloe Martinez</div>
<div style="position:absolute;left:830px;top:342.9px;width:1px;height:30px;background:#e6e8ee"></div>
<div id="t64" class="t" style="left:844.0px;top:345.5px;font-size:10.0px;font-weight:400;color:#3b3f48;transform:scaleX(0.941);-webkit-text-stroke:0.35px #3b3f48;">Status</div>
<div id="t65" class="t" style="left:844.0px;top:359.9px;font-size:10.0px;font-weight:700;color:#26282d;transform:scaleX(0.921);">Completed</div>
<div style="position:absolute;left:434px;top:391.4px;width:580px;height:1px;background:#eceef3"></div>
<div style="position:absolute;left:453px;top:408.6px;width:10px;height:10px;border:1px solid #d3d6dd;border-radius:2px;box-sizing:border-box;background:#fff"></div>
<div id="t66" class="t" style="left:496.8px;top:406.4px;font-size:13.5px;font-weight:700;color:#1c1d21;transform:scaleX(0.888);-webkit-text-stroke:0.3px #1c1d21;">South America (Mixed Group) Google Ads</div>
<div id="t67" class="t" style="left:497.0px;top:433.8px;font-size:10.0px;font-weight:400;color:#689f66;transform:scaleX(0.924);">Live Campaigns Owner</div>
<div id="t68" class="t" style="left:602.3px;top:433.8px;font-size:10.0px;font-weight:400;color:#2f3239;transform:scaleX(0.970);-webkit-text-stroke:0.35px #2f3239;">Daniel Brown</div>
<div style="position:absolute;left:830px;top:410.1px;width:1px;height:30px;background:#e6e8ee"></div>
<div id="t69" class="t" style="left:844.0px;top:412.7px;font-size:10.0px;font-weight:400;color:#3b3f48;transform:scaleX(0.941);-webkit-text-stroke:0.35px #3b3f48;">Status</div>
<div id="t70" class="t" style="left:844.0px;top:427.1px;font-size:10.0px;font-weight:700;color:#26282d;transform:scaleX(0.921);">Completed</div>
<div style="position:absolute;left:434px;top:458.6px;width:580px;height:1px;background:#eceef3"></div>
<div style="position:absolute;left:453px;top:475.8px;width:10px;height:10px;border:1px solid #d3d6dd;border-radius:2px;box-sizing:border-box;background:#fff"></div>
<div id="t71" class="t" style="left:496.8px;top:473.6px;font-size:13.5px;font-weight:700;color:#1c1d21;transform:scaleX(0.889);-webkit-text-stroke:0.3px #1c1d21;">Europe 7Day Trip Instagram Ads</div>
<div id="t72" class="t" style="left:497.0px;top:501.0px;font-size:10.0px;font-weight:400;color:#689f66;transform:scaleX(0.924);">Live Campaigns Owner</div>
<div id="t73" class="t" style="left:602.3px;top:501.0px;font-size:10.0px;font-weight:400;color:#2f3239;transform:scaleX(0.971);-webkit-text-stroke:0.35px #2f3239;">Amelia Burrows</div>
<div style="position:absolute;left:830px;top:477.3px;width:1px;height:30px;background:#e6e8ee"></div>
<div id="t74" class="t" style="left:844.0px;top:479.9px;font-size:10.0px;font-weight:400;color:#3b3f48;transform:scaleX(0.941);-webkit-text-stroke:0.35px #3b3f48;">Status</div>
<div id="t75" class="t" style="left:844.0px;top:494.3px;font-size:10.0px;font-weight:700;color:#26282d;transform:scaleX(0.921);">Completed</div>
<div style="position:absolute;left:434px;top:525.8px;width:580px;height:1px;background:#eceef3"></div>
<div style="position:absolute;left:453px;top:543.0px;width:10px;height:10px;border:1px solid #d3d6dd;border-radius:2px;box-sizing:border-box;background:#fff"></div>
<div id="t76" class="t" style="left:496.8px;top:540.8px;font-size:13.5px;font-weight:700;color:#1c1d21;transform:scaleX(0.898);-webkit-text-stroke:0.3px #1c1d21;">New Zealand (Group - All Women) Facebok Ads</div>
<div id="t77" class="t" style="left:497.0px;top:568.2px;font-size:10.0px;font-weight:400;color:#689f66;transform:scaleX(0.924);">Live Campaigns Owner</div>
<div id="t78" class="t" style="left:602.3px;top:568.2px;font-size:10.0px;font-weight:400;color:#2f3239;transform:scaleX(0.940);-webkit-text-stroke:0.35px #2f3239;">Emily Nguyen</div>
<div style="position:absolute;left:830px;top:544.5px;width:1px;height:30px;background:#e6e8ee"></div>
<div id="t79" class="t" style="left:844.0px;top:547.1px;font-size:10.0px;font-weight:400;color:#3b3f48;transform:scaleX(0.941);-webkit-text-stroke:0.35px #3b3f48;">Status</div>
<div id="t80" class="t" style="left:844.0px;top:561.5px;font-size:10.0px;font-weight:700;color:#26282d;transform:scaleX(0.921);">Completed</div>
<div style="position:absolute;left:434px;top:593.0px;width:580px;height:1px;background:#eceef3"></div>
<div style="position:absolute;left:766px;top:519px;width:246px;height:90px;background:rgba(5,100,245,0.79);border-radius:45px"></div>
<svg style="position:absolute;left:926px;top:524px;" width="82" height="82" viewBox="0 0 82 82" fill="none"><defs><clipPath id="ph"><circle cx="41" cy="41" r="40.5"/></clipPath><filter id="bl" x="-20%" y="-20%" width="140%" height="140%"><feGaussianBlur stdDeviation="0.8"/></filter><radialGradient id="fg" cx="0.45" cy="0.4" r="0.6"><stop offset="0" stop-color="#d0d6e0"/><stop offset="1" stop-color="#b2bac7"/></radialGradient></defs><g clip-path="url(#ph)"><rect width="82" height="82" fill="#8cb9f5"/><g filter="url(#bl)"><path d="M8 84c2-12 8-18 18-21l15 4 14-5c10 3 17 9 20 22z" fill="#d6dce6"/><path d="M21 67c1-3 3-5 6-6.5M55 60.5c3 1 5 3 6.5 6" stroke="#7f8794" stroke-width="2.2"/><path d="M28 52c1 7 5 11 12 12 7-1 11-5 12-12v12c-3 4-7 6-12 6s-9-2-12-6z" fill="#a0a8b5"/><ellipse cx="22.5" cy="37" rx="3" ry="6" fill="#aeb6c3"/><path d="M22 34c0-14 7-22 18-22s18 8 18 22c0 19-8 29-18 29S22 53 22 34z" fill="url(#fg)"/><path d="M21 35C20 18 26 6 40 6 54 6 61 14 59 32L56 33C56 24 54 19 51 16 44 18 33 18 27 16 24 21 24 27 24 35z" fill="#474d5a"/><path d="M28 48c2 10 6 15 12 15s10-5 12-15c-1 2-3 4-5 4-2-1-5-2-7-2s-5 1-7 2c-2 0-4-2-5-4z" fill="#8f97a4"/><path d="M32.5 47.5c4-2.5 11-2.5 15 0" stroke="#5f6672" stroke-width="2"/><path d="M34 50.5c4 2.2 9 2.2 12 0" stroke="#eef1f5" stroke-width="2"/><rect x="26" y="31" width="11" height="7.5" rx="3.5" stroke="#8a919c" stroke-width="1"/><rect x="43" y="31" width="11" height="7.5" rx="3.5" stroke="#8a919c" stroke-width="1"/><path d="M29 35c1.5-1 3.5-1 5 0M46 35c1.5-1 3.5-1 5 0" stroke="#4e5460" stroke-width="1.5"/><path d="M27 28.5c3-1 6-1 9 0M44 28.5c3-1 6-1 9 0" stroke="#4a505c" stroke-width="1.6"/></g></g></svg>
<div id="t81" class="t" style="left:798.8px;top:544.0px;font-size:14.5px;font-weight:400;color:#efc25a;transform:scaleX(0.944);-webkit-text-stroke:0.35px #efc25a;">Team</div>
<div id="t82" class="t" style="left:799.0px;top:566.5px;font-size:23.0px;font-weight:400;color:#f4f7ff;transform:scaleX(0.986);-webkit-text-stroke:0.6px #f4f7ff;">Marketing</div>
<div style="position:absolute;left:9px;top:201px;width:217px;height:292px;background:#ffffff;border-radius:7px;box-shadow:0 2px 6px rgba(20,30,60,0.18);border:1px solid #dadde5;box-sizing:border-box"></div>
<div style="position:absolute;left:16px;top:333px;width:203px;height:27px;background:#eef1f8;border-radius:5px"></div>
<div style="position:absolute;left:16px;top:364px;width:203px;height:27px;background:#f0f2f8;border-radius:5px"></div>
<div style="position:absolute;left:20px;top:211.4px;width:20px;height:20px;background:#f6ac3a;border-radius:5px"></div>
<div id="t83" class="t" style="left:30.0px;top:216.8px;font-size:9.5px;font-weight:700;color:rgba(255,255,255,0.9);transform:translateX(-50%)">HR</div>
<div id="t84" class="t" style="left:47.6px;top:215.3px;font-size:13.0px;font-weight:400;color:#4b4f5c;transform:scaleX(0.905);-webkit-text-stroke:0.35px #4b4f5c;">HR</div>
<div style="position:absolute;left:20px;top:242.6px;width:20px;height:20px;background:#8a6fcf;border-radius:5px"></div>
<div id="t85" class="t" style="left:30.0px;top:248.0px;font-size:9.5px;font-weight:700;color:rgba(255,255,255,0.9);transform:translateX(-50%)">De</div>
<div id="t86" class="t" style="left:47.6px;top:246.5px;font-size:13.0px;font-weight:400;color:#4b4f5c;transform:scaleX(0.992);-webkit-text-stroke:0.35px #4b4f5c;">Development</div>
<div style="position:absolute;left:20px;top:273.7px;width:20px;height:20px;background:#f28a4a;border-radius:5px"></div>
<div id="t87" class="t" style="left:30.0px;top:279.1px;font-size:9.5px;font-weight:700;color:rgba(255,255,255,0.9);transform:translateX(-50%)">Op</div>
<div id="t88" class="t" style="left:47.6px;top:277.6px;font-size:13.0px;font-weight:400;color:#4b4f5c;transform:scaleX(1.006);-webkit-text-stroke:0.35px #4b4f5c;">Operations</div>
<div style="position:absolute;left:20px;top:304.9px;width:20px;height:20px;background:#f59c9c;border-radius:5px"></div>
<div id="t89" class="t" style="left:30.0px;top:310.3px;font-size:9.5px;font-weight:700;color:rgba(255,255,255,0.9);transform:translateX(-50%)">Se</div>
<div id="t90" class="t" style="left:47.6px;top:308.8px;font-size:13.0px;font-weight:400;color:#4b4f5c;transform:scaleX(1.084);-webkit-text-stroke:0.35px #4b4f5c;">Service</div>
<div style="position:absolute;left:20px;top:336.0px;width:20px;height:20px;background:#4a9ef0;border-radius:5px"></div>
<div id="t91" class="t" style="left:30.0px;top:341.4px;font-size:9.5px;font-weight:700;color:rgba(255,255,255,0.9);transform:translateX(-50%)">Ma</div>
<div id="t92" class="t" style="left:47.6px;top:339.9px;font-size:13.0px;font-weight:400;color:#4b4f5c;transform:scaleX(0.981);-webkit-text-stroke:0.35px #4b4f5c;">Marketing</div>
<div style="position:absolute;left:20px;top:367.1px;width:20px;height:20px;background:#ee5c7a;border-radius:5px"></div>
<div id="t93" class="t" style="left:30.0px;top:372.6px;font-size:9.5px;font-weight:700;color:rgba(255,255,255,0.9);transform:translateX(-50%)">Sa</div>
<div id="t94" class="t" style="left:47.6px;top:371.1px;font-size:13.0px;font-weight:400;color:#4b4f5c;transform:scaleX(0.922);-webkit-text-stroke:0.35px #4b4f5c;">Sales</div>
<div style="position:absolute;left:20px;top:398.3px;width:20px;height:20px;background:#ef7a5f;border-radius:5px"></div>
<div id="t95" class="t" style="left:30.0px;top:403.7px;font-size:9.5px;font-weight:700;color:rgba(255,255,255,0.9);transform:translateX(-50%)">On</div>
<div id="t96" class="t" style="left:47.6px;top:402.2px;font-size:13.0px;font-weight:400;color:#4b4f5c;transform:scaleX(1.015);-webkit-text-stroke:0.35px #4b4f5c;">Onboarding</div>
<div style="position:absolute;left:20px;top:429.4px;width:20px;height:20px;background:#5bbcec;border-radius:5px"></div>
<div id="t97" class="t" style="left:30.0px;top:434.9px;font-size:9.5px;font-weight:700;color:rgba(255,255,255,0.9);transform:translateX(-50%)">Le</div>
<div id="t98" class="t" style="left:47.6px;top:433.4px;font-size:13.0px;font-weight:400;color:#4b4f5c;transform:scaleX(0.912);-webkit-text-stroke:0.35px #4b4f5c;">Legal</div>
<div style="position:absolute;left:20px;top:460.6px;width:20px;height:20px;background:#b05ee8;border-radius:5px"></div>
<div id="t99" class="t" style="left:30.0px;top:466.0px;font-size:9.5px;font-weight:700;color:rgba(255,255,255,0.9);transform:translateX(-50%)">Fi</div>
<div id="t100" class="t" style="left:47.6px;top:464.6px;font-size:13.0px;font-weight:400;color:#4b4f5c;transform:scaleX(0.973);-webkit-text-stroke:0.35px #4b4f5c;">Finance</div>
<svg style="position:absolute;left:197px;top:340px;" width="14" height="14" viewBox="0 0 14 14" fill="none"><circle cx="7" cy="7" r="7" fill="#4258d6"/><path d="M4 7.2l2 2 4-4.2" stroke="#fff" stroke-width="1.5" fill="none"/></svg>
<svg style="position:absolute;left:175px;top:371.5px;" width="10" height="10" viewBox="0 0 10 10" fill="none"><path d="M1 9l0.6-2.6L7.2 0.8l2 2L3.6 8.4z" fill="#33363d"/></svg>
<svg style="position:absolute;left:195px;top:370.5px;" width="10" height="12" viewBox="0 0 10 12" fill="none"><path d="M0.5 2.5h9M3.5 2.5V1h3v1.5" stroke="#4b4f5c" stroke-width="1.1"/><rect x="1.6" y="2.8" width="6.8" height="8.6" rx="1.2" stroke="#4b4f5c" stroke-width="1.1"/><path d="M4 5v4M6 5v4" stroke="#4b4f5c" stroke-width="1"/></svg>
<svg style="position:absolute;left:120px;top:365px;" width="50" height="45" viewBox="0 0 50 45" fill="none"><path d="M13.6 13.2C13.1 11.4 14.6 10.1 16.4 10.2 17.8 10.3 18.6 11 19.1 11.8L23.8 21.6C24.3 19.6 25.2 18.8 26.3 18.7 27.6 18.6 28.4 19.4 28.8 20.4 29.3 17.7 30.5 16.6 31.7 16.6 33 16.6 33.9 17.6 34.3 18.9 34.9 17.1 35.9 16.5 37 16.6 38.4 16.8 39.5 17.7 40.3 19.1 42.6 23 44.7 27.4 44.7 31 44.5 35.6 41.4 39.6 35 40.3 29 40.9 23.4 38.6 18.8 35.8L14.2 33C12.6 32.1 12.5 30.1 13.6 29.4 14.8 28.6 16.8 28.8 20 29.6z" fill="#ffffff" stroke="#26272b" stroke-width="1.7" stroke-linejoin="round"/><path d="M24.2 25.2 23.6 21.4M29.6 24.6 28.8 20.4M35 24.2 34.3 19" stroke="#26272b" stroke-width="1.6" stroke-linecap="round"/></svg>
</body></html>
